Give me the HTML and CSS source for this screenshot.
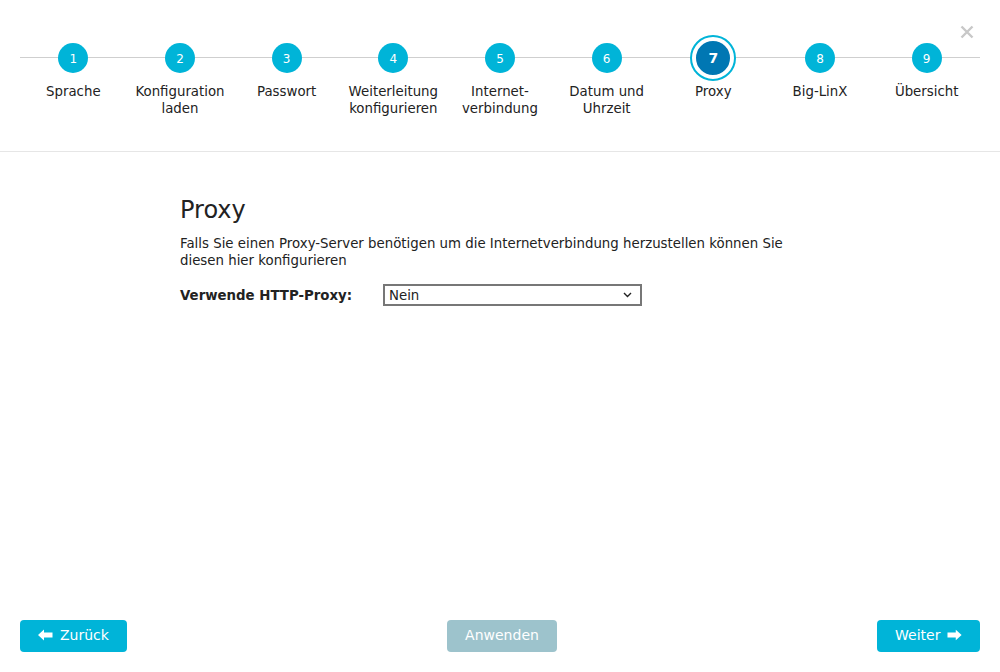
FILE: index.html
```html
<!DOCTYPE html>
<html lang="de">
<head>
<meta charset="utf-8">
<link rel="stylesheet" href="styles.css">
</head>
<body>
<div class="page">
  <header class="wizard-head">
    <svg class="close" width="14" height="14" viewBox="0 0 14 14"><path d="M1.5 1.5L12.5 12.5M12.5 1.5L1.5 12.5" stroke="#c8c8c8" stroke-width="2.4"/></svg>
    <ol class="steps">
      <li class="step"><span class="dot">1</span><span class="label">Sprache</span></li>
      <li class="step"><span class="dot">2</span><span class="label">Konfiguration<br>laden</span></li>
      <li class="step"><span class="dot">3</span><span class="label">Passwort</span></li>
      <li class="step"><span class="dot">4</span><span class="label">Weiterleitung<br>konfigurieren</span></li>
      <li class="step"><span class="dot">5</span><span class="label">Internet-<br>verbindung</span></li>
      <li class="step"><span class="dot">6</span><span class="label">Datum und<br>Uhrzeit</span></li>
      <li class="step active"><span class="dot">7</span><span class="label">Proxy</span></li>
      <li class="step"><span class="dot">8</span><span class="label">Big-LinX</span></li>
      <li class="step"><span class="dot">9</span><span class="label">Übersicht</span></li>
    </ol>
  </header>
  <main class="content">
    <h1 class="title">Proxy</h1>
    <p class="desc">Falls Sie einen Proxy-Server benötigen um die Internetverbindung herzustellen können Sie diesen hier konfigurieren</p>
    <div class="form-row">
      <label class="form-label">Verwende HTTP-Proxy:</label>
      <div class="select"><span>Nein</span>
        <svg class="chev" width="9" height="6" viewBox="0 0 9 6"><path d="M1 1l3.5 3.5L8 1" fill="none" stroke="#222" stroke-width="1.4"/></svg>
      </div>
    </div>
  </main>
  <footer class="actions">
    <button class="btn btn-back"><svg width="15" height="12" viewBox="0 0 15 12"><path d="M0 6L6 0.5V3.5H14.5V8.5H6V11.5Z" fill="#fff"/></svg>Zurück</button>
    <button class="btn btn-apply">Anwenden</button>
    <button class="btn btn-next">Weiter<svg width="15" height="12" viewBox="0 0 15 12"><path d="M15 6L9 0.5V3.5H0.5V8.5H9V11.5Z" fill="#fff"/></svg></button>
  </footer>
</div>
</body>
</html>
```

FILE: styles.css
```css
* { box-sizing: border-box; }
html, body { margin: 0; padding: 0; background: #fff; }
body {
  font-family: "DejaVu Sans", "Liberation Sans", sans-serif;
  color: #222;
  width: 1000px;
  height: 672px;
  overflow: hidden;
}
.page {
  height: 672px;
  display: flex;
  flex-direction: column;
}
.wizard-head {
  position: relative;
  height: 152px;
  border-bottom: 1px solid #e6e6e6;
  padding: 35px 20px 0;
}
.close {
  position: absolute;
  top: 25px;
  right: 26px;
}
.steps {
  list-style: none;
  margin: 0;
  padding: 0;
  display: grid;
  grid-template-columns: repeat(9, 1fr);
  position: relative;
}
.steps::before {
  content: "";
  position: absolute;
  left: 0;
  right: 0;
  top: 22px;
  height: 1px;
  background: #cfcfcf;
}
.step {
  display: flex;
  flex-direction: column;
  align-items: center;
  position: relative;
}
.dot {
  width: 30px;
  height: 30px;
  margin-top: 8px;
  padding-top: 1px;
  border-radius: 50%;
  background: #00b4d8;
  color: #fff;
  font-size: 12px;
  display: flex;
  align-items: center;
  justify-content: center;
  position: relative;
}
.step.active .dot {
  width: 46px;
  height: 46px;
  margin: 0 0 -8px;
  padding-top: 0;
  background: #0077b3;
  border: 6px solid #fff;
  outline: 2px solid #00b4d8;
  outline-offset: -2px;
  font-weight: bold;
  font-size: 14px;
}
.label {
  margin-top: 10px;
  font-size: 13.33px;
  line-height: 17px;
  text-align: center;
  color: #222;
}
.content {
  flex: 1;
  padding: 43px 180px 0;
}
.title {
  margin: 0;
  font-size: 24px;
  font-weight: normal;
  line-height: 30px;
}
.desc {
  margin: 10px 0 0;
  font-size: 13.33px;
  line-height: 17px;
  max-width: 620px;
}
.form-row {
  display: flex;
  align-items: center;
  margin-top: 15px;
}
.form-label {
  width: 203px;
  font-weight: bold;
  font-size: 13.33px;
}
.select {
  width: 259px;
  height: 22px;
  border: 2px solid #777;
  display: flex;
  align-items: center;
  justify-content: space-between;
  padding: 0 8px 0 4px;
  font-size: 13.33px;
}
.actions {
  display: flex;
  justify-content: space-between;
  align-items: center;
  padding: 0 20px 20px;
}
.btn {
  height: 32px;
  border: none;
  border-radius: 4px;
  background: #00b4d8;
  color: #fff;
  font-family: "DejaVu Sans", "Liberation Sans", sans-serif;
  font-size: 14px;
  display: flex;
  align-items: center;
  gap: 7px;
  padding: 0 18px 2px;
}
.btn-back { width: 107px; }
.btn-apply { width: 110px; background: #9dc3cc; justify-content: center; }
.btn-next { width: 103px; }
```
